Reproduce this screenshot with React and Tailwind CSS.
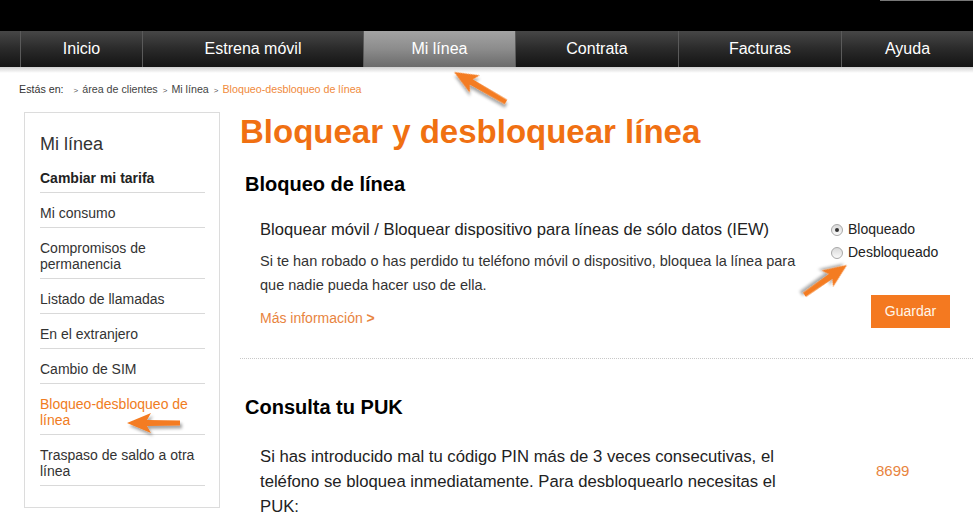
import React from 'react';

const navItems = [
  { label: 'Inicio', w: 'w-[122px]' },
  { label: 'Estrena móvil', w: 'w-[221px]' },
  { label: 'Mi línea', w: 'w-[152px]', active: true },
  { label: 'Contrata', w: 'w-[163px]' },
  { label: 'Facturas', w: 'w-[163px]' },
  { label: 'Ayuda', w: 'flex-1' },
];

const sideItems = [
  { label: 'Cambiar mi tarifa', bold: true },
  { label: 'Mi consumo' },
  { label: ['Compromisos de', 'permanencia'] },
  { label: 'Listado de llamadas' },
  { label: 'En el extranjero' },
  { label: 'Cambio de SIM' },
  { label: ['Bloqueo-desbloqueo de', 'línea'], active: true },
  { label: ['Traspaso de saldo a otra', 'línea'] },
];

function Arrow({ x, y, angle, length }) {
  // tip sits at (x, y); the tail runs out along +x before rotation
  const L = length;
  return (
    <g transform={`translate(${x} ${y}) rotate(${angle})`} filter="url(#arrowShadow)">
      <polygon
        points={`0,0 24,-10 20,-3 ${L},-2.5 ${L},2.5 20,3 24,10`}
        fill="#f47b20"
      />
    </g>
  );
}

function Radio({ checked, label }) {
  return (
    <div className="flex items-center h-[23px]">
      <span className="w-[12px] h-[12px] rounded-full border border-[#a8a8a8] bg-gradient-to-b from-[#d9d9d9] to-[#fafafa] flex items-center justify-center">
        {checked && <span className="w-[4px] h-[4px] rounded-full bg-[#333]"></span>}
      </span>
      <span className="ml-[5px] text-[14px] text-[#222]">{label}</span>
    </div>
  );
}

export default function App() {
  return (
    <div className="relative w-[973px] h-[518px] overflow-hidden bg-white font-['Liberation_Sans',Arial,sans-serif]">
      {/* top black strip */}
      <div className="h-[31px] bg-black flex justify-end">
        <div className="w-[93px] h-[1px] bg-[#777]"></div>
      </div>

      {/* main navigation */}
      <div className="flex h-[36px] bg-gradient-to-b from-[#474747] via-[#2a2a2a] to-[#141414]">
        <div className="w-[20px]"></div>
        {navItems.map((item) => (
          <div
            key={item.label}
            className={
              item.active
                ? `${item.w} flex items-center justify-center text-[16px] text-white bg-gradient-to-b from-[#a3a3a3] via-[#8c8c8c] to-[#6b6b6b] border-l border-[#5a5a5a]`
                : `${item.w} flex items-center justify-center text-[16px] text-white border-l border-[#5a5a5a]`
            }
          >
            {item.label}
          </div>
        ))}
      </div>
      <div className="h-[6px] bg-gradient-to-b from-[#d0d0d0] to-white"></div>

      {/* breadcrumb */}
      <div className="flex items-baseline h-[20px] mt-[8px] pl-[19px] text-[10.7px] text-[#333]">
        <span>Estás en:</span>
        <span className="ml-[10px] text-[8px] text-[#555]">&gt;</span>
        <span className="ml-[4px] text-[#444]">área de clientes</span>
        <span className="ml-[5px] text-[8px] text-[#555]">&gt;</span>
        <span className="ml-[4px] text-[#444]">Mi línea</span>
        <span className="ml-[5px] text-[8px] text-[#555]">&gt;</span>
        <span className="ml-[4px] text-[#f08a3c]">Bloqueo-desbloqueo de línea</span>
      </div>

      <div className="flex items-start mt-[11px]">
        {/* sidebar */}
        <aside className="ml-[24px] w-[196px] h-[396px] border border-[#dcdcdc] pl-[15px] pr-[14px] pt-[20px]">
          <div className="text-[18px] leading-[22px] text-[#333]">Mi línea</div>
          <ul className="mt-[3px]">
            {sideItems.map((item, i) => (
              <li
                key={i}
                className={
                  item.bold
                    ? 'pt-[12px] pb-[6px] text-[14px] leading-[16px] font-bold text-[#222] border-b border-[#d9d9d9]'
                    : item.active
                    ? 'pt-[12px] pb-[6px] text-[14px] leading-[16px] text-[#f07c22] border-b border-[#d9d9d9]'
                    : 'pt-[12px] pb-[6px] text-[14px] leading-[16px] text-[#333] border-b border-[#d9d9d9]'
                }
              >
                {Array.isArray(item.label) ? (
                  <>
                    {item.label[0]}
                    <br />
                    {item.label[1]}
                  </>
                ) : (
                  item.label
                )}
              </li>
            ))}
          </ul>
        </aside>

        {/* content */}
        <main className="ml-[20px] flex-1">
          <h1 className="text-[33px] leading-[40px] font-bold text-[#f07012]">
            Bloquear y desbloquear línea
          </h1>
          <h2 className="mt-[20px] ml-[5px] text-[20px] leading-[24px] font-bold text-black">Bloqueo de línea</h2>

          <div className="flex pl-[20px] pr-[23px] pb-[30px] border-b border-dotted border-[#c8c8c8]">
            <div className="w-[571px]">
              <div className="mt-[23px] text-[16.6px] leading-[22px] text-[#222]">
                Bloquear móvil / Bloquear dispositivo para líneas de sólo datos (IEW)
              </div>
              <p className="mt-[8px] text-[14.5px] leading-[24px] text-[#333]">
                Si te han robado o has perdido tu teléfono móvil o dispositivo, bloquea la línea para
                <br />
                que nadie pueda hacer uso de ella.
              </p>
              <div className="mt-[11px] text-[14px] leading-[20px] text-[#e8843e]">
                Más información <span className="font-bold">&gt;</span>
              </div>
            </div>
            <div className="flex-1 flex flex-col pt-[22px]">
              <Radio checked label="Bloqueado" />
              <Radio label="Desbloqueado" />
              <button className="self-end mt-[31px] w-[79px] h-[33px] bg-[#f47920] text-[14px] text-[#fff6e8]">
                Guardar
              </button>
            </div>
          </div>

          <h2 className="mt-[36px] ml-[5px] text-[20px] leading-[24px] font-bold text-black">Consulta tu PUK</h2>
          <div className="flex pl-[20px] mt-[25px]">
            <p className="w-[560px] text-[16.7px] leading-[25px] text-[#222]">
              Si has introducido mal tu código PIN más de 3 veces consecutivas, el
              <br />
              teléfono se bloquea inmediatamente. Para desbloquearlo necesitas el
              <br />
              PUK:
            </p>
            <div className="ml-[56px] mt-[14px] text-[15px] leading-[25px] text-[#e8843e]">
              8699
            </div>
          </div>
        </main>
      </div>

      {/* annotation arrows */}
      <svg className="absolute left-0 top-0 pointer-events-none" width="973" height="518">
        <defs>
          <filter id="arrowShadow" x="-30%" y="-30%" width="160%" height="160%">
            <feDropShadow dx="2" dy="3" stdDeviation="1.5" floodColor="#000" floodOpacity="0.35" />
          </filter>
        </defs>
        <Arrow x={454} y={72} angle={30} length={60} />
        <Arrow x={127} y={423} angle={0} length={53} />
        <Arrow x={847} y={265} angle={145} length={52} />
      </svg>
    </div>
  );
}
